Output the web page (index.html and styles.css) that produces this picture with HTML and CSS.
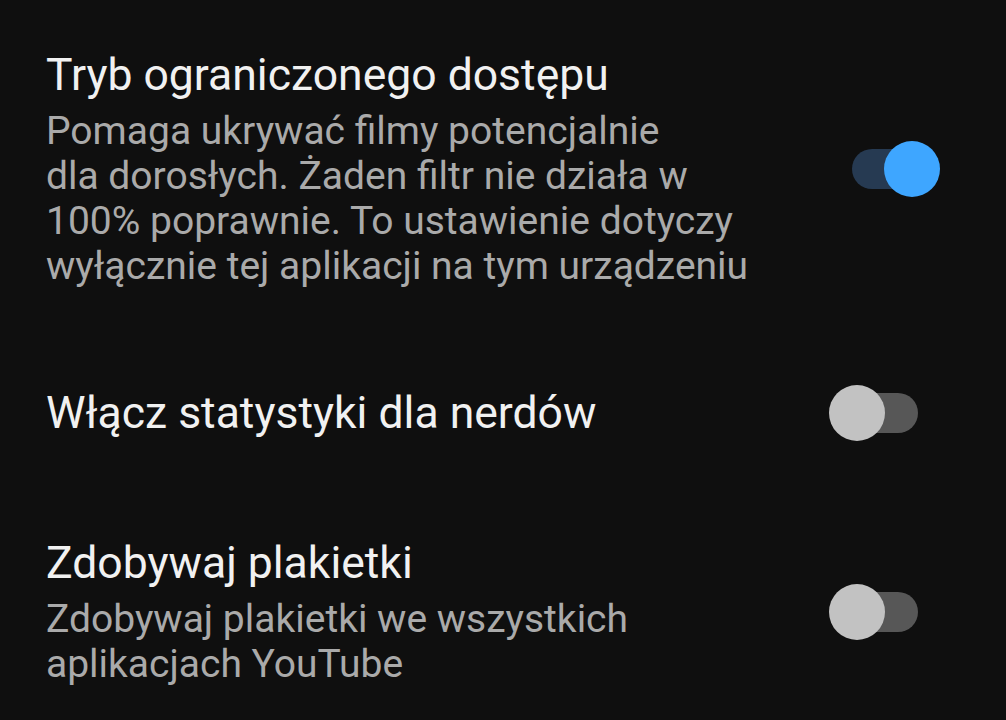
FILE: index.html
```html
<!DOCTYPE html>
<html lang="pl">
<head>
  <meta charset="UTF-8">
  <title>Ustawienia ogólne</title>
  <link rel="stylesheet" href="styles.css">
</head>
<body>

  <div class="settings">

    <!-- Tryb ograniczonego dostępu -->
    <div class="setting">
      <div class="setting-text">
        <div class="setting-title">Tryb ograniczonego dostępu</div>
        <div class="setting-desc">Pomaga ukrywać filmy potencjalnie<br>dla dorosłych. Żaden filtr nie działa w<br>100% poprawnie. To ustawienie dotyczy<br>wyłącznie tej aplikacji na tym urządzeniu</div>
      </div>
      <div class="toggle on"><span class="knob"></span></div>
    </div>

    <!-- Statystyki -->
    <div class="setting">
      <div class="setting-text">
        <div class="setting-title">Włącz statystyki dla nerdów</div>
      </div>
      <div class="toggle"><span class="knob"></span></div>
    </div>

    <!-- Plakietki -->
    <div class="setting">
      <div class="setting-text">
        <div class="setting-title">Zdobywaj plakietki</div>
        <div class="setting-desc">Zdobywaj plakietki we wszystkich<br>aplikacjach YouTube</div>
      </div>
      <div class="toggle"><span class="knob"></span></div>
    </div>

  </div>

</body>
</html>
```

FILE: styles.css
```css
body {
  margin: 0;
  background-color: #0f0f0f;
  font-family: Roboto, "Noto Sans", sans-serif;
  overflow: hidden;
}

.settings {
  padding: 0 88px 0 46px;
}

.setting {
  display: flex;
  align-items: center;
  justify-content: space-between;
  padding: 49px 0;
}

.setting-text {
  flex: 1;
}

.setting-title {
  font-size: 44.5px;
  line-height: 52px;
  color: #f1f1f1;
}

.setting-desc {
  margin-top: 8px;
  font-size: 39px;
  line-height: 45px;
  color: #aaaaaa;
}

/* --- Przełącznik --- */
.toggle {
  width: 66px;
  height: 40px;
  border-radius: 20px;
  background-color: #575757;
  position: relative;
  flex-shrink: 0;
}

.toggle .knob {
  position: absolute;
  top: -8px;
  left: -23px;
  width: 56px;
  height: 56px;
  border-radius: 50%;
  background-color: #c2c2c2;
}

.toggle.on {
  background-color: #263a52;
}

.toggle.on .knob {
  left: 32px;
  background-color: #3ea6ff;
}
```
